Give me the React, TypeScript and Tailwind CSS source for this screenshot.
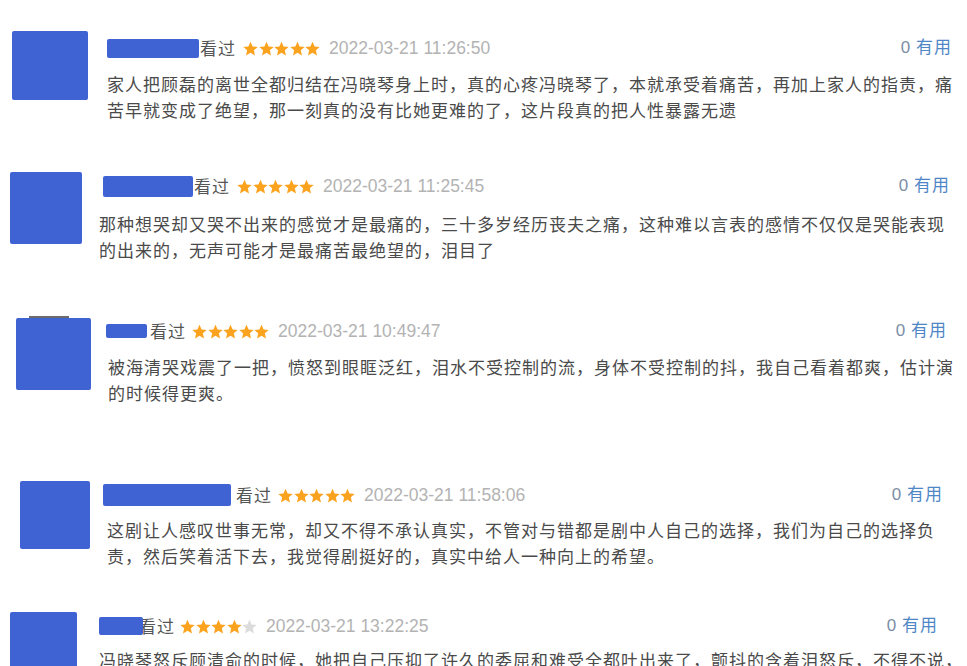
import React from 'react';

type Review = {
  block: string;
  avatar: string;
  col: string;
  header: string;
  name: string;
  seenGap: string;
  starGap: string;
  text: string;
  cover?: boolean;
  rating: number;
  date: string;
  lines: string;
};

const reviews: Review[] = [
  {
    block: 'h-[141px] pl-[12px]',
    avatar: 'w-[76px] h-[69px]',
    col: 'ml-[19px] w-[845px]',
    header: 'mt-[5px]',
    name: 'w-[92px] h-[19px]',
    seenGap: 'ml-[1px]',
    starGap: 'ml-[7px]',
    text: 'mt-[11px] w-[848px]',
    rating: 5,
    date: '2022-03-21 11:26:50',
    lines:
      '家人把顾磊的离世全都归结在冯晓琴身上时，真的心疼冯晓琴了，本就承受着痛苦，再加上家人的指责，痛苦早就变成了绝望，那一刻真的没有比她更难的了，这片段真的把人性暴露无遗',
  },
  {
    block: 'h-[146px] pl-[10px]',
    avatar: 'w-[72px] h-[72px]',
    col: 'ml-[17px] w-[851px]',
    header: 'mt-[2px]',
    name: 'w-[90px] h-[21px] ml-[4px]',
    seenGap: 'ml-[1px]',
    starGap: 'ml-[7px]',
    text: 'mt-[13px] w-[848px]',
    rating: 5,
    date: '2022-03-21 11:25:45',
    lines:
      '那种想哭却又哭不出来的感觉才是最痛的，三十多岁经历丧夫之痛，这种难以言表的感情不仅仅是哭能表现的出来的，无声可能才是最痛苦最绝望的，泪目了',
  },
  {
    block: 'h-[163px] pl-[16px]',
    avatar: 'w-[75px] h-[72px]',
    col: 'ml-[15px] w-[841px]',
    header: 'mt-[1px]',
    name: 'w-[41px] h-[14px]',
    seenGap: 'ml-[3px]',
    starGap: 'ml-[6px]',
    text: 'mt-[11px] ml-[2px] w-[848px]',
    cover: true,
    rating: 5,
    date: '2022-03-21 10:49:47',
    lines:
      '被海清哭戏震了一把，愤怒到眼眶泛红，泪水不受控制的流，身体不受控制的抖，我自己看着都爽，估计演的时候得更爽。',
  },
  {
    block: 'h-[131px] pl-[20px]',
    avatar: 'w-[70px] h-[68px]',
    col: 'ml-[13px] w-[840px]',
    header: 'mt-[2px]',
    name: 'w-[128px] h-[22px]',
    seenGap: 'ml-[5px]',
    starGap: 'ml-[6px]',
    text: 'mt-[10px] ml-[4px] w-[848px]',
    rating: 5,
    date: '2022-03-21 11:58:06',
    lines:
      '这剧让人感叹世事无常，却又不得不承认真实，不管对与错都是剧中人自己的选择，我们为自己的选择负责，然后笑着活下去，我觉得剧挺好的，真实中给人一种向上的希望。',
  },
  {
    block: 'h-[120px] pl-[10px]',
    avatar: 'w-[67px] h-[60px]',
    col: 'ml-[22px] w-[839px]',
    header: 'mt-[2px]',
    name: 'w-[44px] h-[18px]',
    seenGap: 'ml-[-4px]',
    starGap: 'ml-[5px]',
    text: 'mt-[9px] w-[866px]',
    rating: 4,
    date: '2022-03-21 13:22:25',
    lines:
      '冯晓琴怒斥顾清俞的时候，她把自己压抑了许久的委屈和难受全都吐出来了，颤抖的含着泪怒斥，不得不说，海清的演技真的很好',
  },
];

const Star = ({ on }: { on: boolean }) => (
  <svg width="15" height="15" viewBox="1 1.2 22 21">
    <path
      d="M12 1.8l3.1 6.9 7.4.7-5.6 5 1.7 7.4L12 18l-6.6 3.8 1.7-7.4-5.6-5 7.4-.7z"
      fill={on ? '#fba31f' : '#dcdcdc'}
    />
  </svg>
);

const ReviewItem = ({ r }: { r: Review }) => (
  <div className={`flex items-start shrink-0 ${r.block}`}>
    <div className="flex flex-col items-center shrink-0">
      {r.cover && <div className="w-[40px] h-[2px] bg-[#6b6b6b] mt-[-2px] ml-[-10px]" />}
      <div className={`bg-[#4063d4] rounded-[2px] ${r.avatar}`} />
    </div>
    <div className={`flex flex-col shrink-0 ${r.col}`}>
      <div className={`flex items-center h-[24px] ${r.header}`}>
        <div className={`bg-[#4063d4] rounded-[2px] relative z-10 ${r.name}`} />
        <span className={`text-[17px] tracking-[1px] text-[#555] ${r.seenGap}`}>看过</span>
        <span className={`flex gap-[0.5px] ${r.starGap}`}>
          {[0, 1, 2, 3, 4].map(i => (
            <Star key={i} on={i < r.rating} />
          ))}
        </span>
        <span className="ml-[9px] text-[17.5px] text-[#b3b3b3] font-['Liberation_Sans',sans-serif]">
          {r.date}
        </span>
        <span className="ml-auto text-[17px] font-['Liberation_Sans','Noto_Sans_CJK_SC',sans-serif]">
          <span className="text-[#7c8ea6]">0</span>
          <span className="text-[#4f86c6] tracking-[1px]"> 有用</span>
        </span>
      </div>
      <p className={`text-[17px] tracking-[1px] leading-[26px] text-[#4a4a4a] ${r.text}`}>
        {r.lines}
      </p>
    </div>
  </div>
);

const App: React.FC = () => {
  return (
    <div className="w-[967px] h-[666px] overflow-hidden bg-white flex flex-col pt-[31px] font-['Noto_Sans_CJK_SC',sans-serif]">
      {reviews.map((r, i) => (
        <ReviewItem key={i} r={r} />
      ))}
    </div>
  );
};

export default App;
